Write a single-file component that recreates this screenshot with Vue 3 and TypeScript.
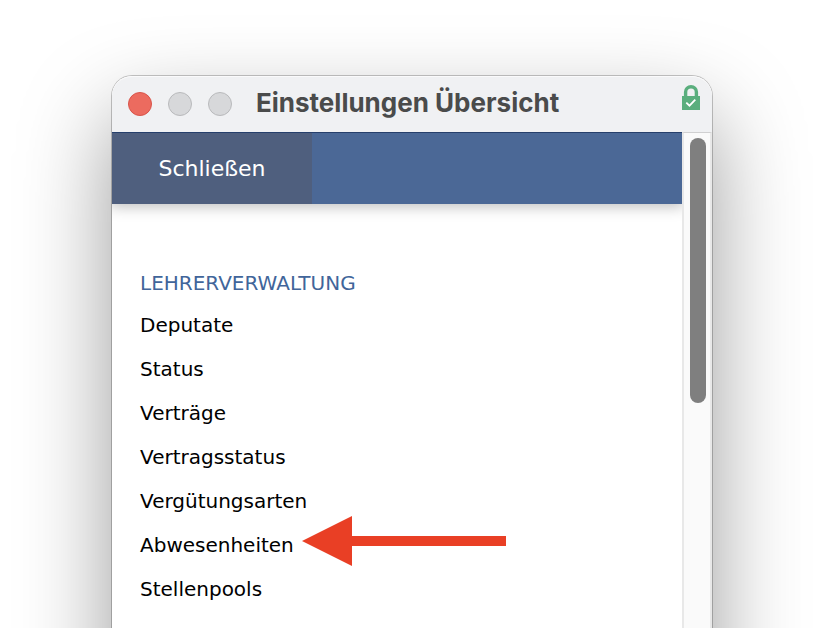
<script setup lang="ts">
interface Entry {
  label: string
  marked?: boolean
}

const heading = 'LEHRERVERWALTUNG'
const entries: Entry[] = [
  { label: 'Deputate' },
  { label: 'Status' },
  { label: 'Verträge' },
  { label: 'Vertragsstatus' },
  { label: 'Vergütungsarten' },
  { label: 'Abwesenheiten', marked: true },
  { label: 'Stellenpools' },
]
</script>

<template>
  <div class="desktop">
    <main class="window">
      <header class="titlebar">
        <div class="lights">
          <button class="light close" type="button" aria-label="Fenster schließen"></button>
          <button class="light" type="button" aria-label="Minimieren" disabled></button>
          <button class="light" type="button" aria-label="Zoomen" disabled></button>
        </div>
        <h1 class="title">Einstellungen Übersicht</h1>
        <svg class="lock" viewBox="0 0 18 25" aria-hidden="true">
          <path d="M3.6 12V6.9a5.4 5.2 0 0 1 10.8 0V12" fill="none" stroke="#5aae7d" stroke-width="3.4" />
          <rect y="11" width="18" height="14" fill="#5aae7d" />
          <path d="M4.3 17.6l3.2 3.1 5.8-6" fill="none" stroke="#fff" stroke-width="1.8" />
        </svg>
      </header>
      <div class="body">
        <div class="page">
          <div class="toolbar">
            <button class="action" type="button">Schließen</button>
          </div>
          <nav class="menu" aria-labelledby="menu-heading">
            <h2 id="menu-heading" class="heading">{{ heading }}</h2>
            <ul class="list">
              <li v-for="entry in entries" :key="entry.label" class="item">
                <a class="link" href="#">{{ entry.label }}</a>
                <svg v-if="entry.marked" class="arrow" viewBox="0 0 204 50" aria-hidden="true">
                  <path d="M0 25L50 0V20H204V30H50V50Z" fill="#e93f25" />
                </svg>
              </li>
            </ul>
          </nav>
        </div>
        <div class="scrollbar" aria-hidden="true">
          <div class="thumb"></div>
        </div>
      </div>
    </main>
  </div>
</template>

<style>
body {
  margin: 0;
  background: #fff;
}
</style>

<style scoped>
.desktop {
  box-sizing: border-box;
  height: 100vh;
  padding: 76px 112px 0;
  overflow: hidden;
  font-family: Verdana, "DejaVu Sans", sans-serif;
}

.window {
  display: flex;
  flex-direction: column;
  min-height: 130vh;
  border-radius: 20px 20px 0 0;
  background: #fff;
  box-shadow:
    0 0 0 1px rgba(0, 0, 0, 0.22),
    0 40px 92px rgba(0, 0, 0, 0.4);
}

.titlebar {
  display: flex;
  align-items: center;
  box-sizing: border-box;
  height: 56px;
  padding: 0 12px 2px 16px;
  border-top: 1px solid #fafafb;
  border-radius: 20px 20px 0 0;
  background: #f0f1f3;
}

.lights {
  display: flex;
  gap: 16px;
}

.light {
  box-sizing: border-box;
  width: 24px;
  height: 24px;
  padding: 0;
  border: 1px solid #b9babc;
  border-radius: 50%;
  background: #d7d8da;
}

.close {
  border-color: #d9544a;
  background: #ec6b5f;
}

.title {
  flex: 1;
  margin: 0 0 2px 24px;
  color: #4a4b4b;
  font: 700 26px/32px Inter, sans-serif;
  font-optical-sizing: none;
}

.lock {
  align-self: flex-start;
  width: 18px;
  height: 25px;
  margin-top: 8px;
}

.body {
  display: flex;
  flex: 1;
}

.page {
  flex: 1;
  overflow: hidden;
}

.toolbar {
  display: flex;
  box-sizing: border-box;
  height: 72px;
  border-top: 1px solid #263f6b;
  background: #4b6896;
  box-shadow: 0 0 14px 2px rgba(0, 0, 0, 0.28);
}

.action {
  width: 200px;
  padding: 0;
  border: 0;
  background: #4f5f7e;
  color: #fff;
  font-family: inherit;
  font-size: 22px;
}

.menu {
  padding: 59px 28px 0;
}

.heading {
  margin: 0;
  color: #41659a;
  font-size: 20px;
  font-weight: 400;
  line-height: 40px;
}

.list {
  margin: 0;
  padding: 0;
  list-style: none;
}

.item {
  position: relative;
  width: max-content;
}

.link {
  display: block;
  color: #000;
  font-size: 20px;
  line-height: 44px;
  text-decoration: none;
}

.arrow {
  position: absolute;
  top: -7px;
  left: calc(100% + 8px);
  width: 204px;
  height: 50px;
}

.scrollbar {
  box-sizing: border-box;
  width: 30px;
  padding: 5px 4px 0 6px;
  border: solid #e8e8e8;
  border-width: 1px 2px 0;
  border-top-color: #d0d0d1;
  background: #fafafa;
}

.thumb {
  width: 16px;
  height: 265px;
  border-radius: 8px;
  background: #7f7f7f;
}
</style>
